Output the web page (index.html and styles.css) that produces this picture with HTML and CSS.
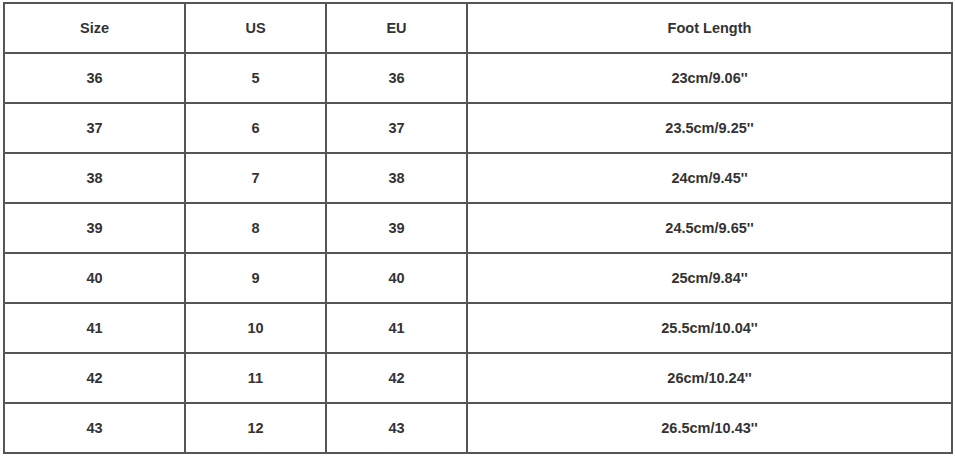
FILE: index.html
```html
<!DOCTYPE html>
<html>
<head>
<meta charset="utf-8">
<link rel="stylesheet" href="styles.css">
</head>
<body>
<table class="size-chart">
  <colgroup>
    <col class="c-size"><col class="c-us"><col class="c-eu"><col class="c-foot">
  </colgroup>
  <tr><td>Size</td><td>US</td><td>EU</td><td>Foot Length</td></tr>
  <tr><td>36</td><td>5</td><td>36</td><td>23cm/9.06''</td></tr>
  <tr><td>37</td><td>6</td><td>37</td><td>23.5cm/9.25''</td></tr>
  <tr><td>38</td><td>7</td><td>38</td><td>24cm/9.45''</td></tr>
  <tr><td>39</td><td>8</td><td>39</td><td>24.5cm/9.65''</td></tr>
  <tr><td>40</td><td>9</td><td>40</td><td>25cm/9.84''</td></tr>
  <tr><td>41</td><td>10</td><td>41</td><td>25.5cm/10.04''</td></tr>
  <tr><td>42</td><td>11</td><td>42</td><td>26cm/10.24''</td></tr>
  <tr><td>43</td><td>12</td><td>43</td><td>26.5cm/10.43''</td></tr>
</table>
</body>
</html>
```
FILE: styles.css
```css
html, body {
  margin: 0;
  padding: 0;
  background: #ffffff;
}
.size-chart {
  margin: 2px 0 0 3px;
  width: 948px;
  border-collapse: collapse;
  table-layout: fixed;
  font-family: "Liberation Sans", Arial, sans-serif;
  font-weight: bold;
  font-size: 14.5px;
  color: #333333;
}
.c-size { width: 181px; }
.c-us { width: 141px; }
.c-eu { width: 141px; }
.c-foot { width: 485px; }
.size-chart td {
  border: 2px solid #555555;
  height: 48px;
  padding: 0;
  text-align: center;
  vertical-align: middle;
}
```
